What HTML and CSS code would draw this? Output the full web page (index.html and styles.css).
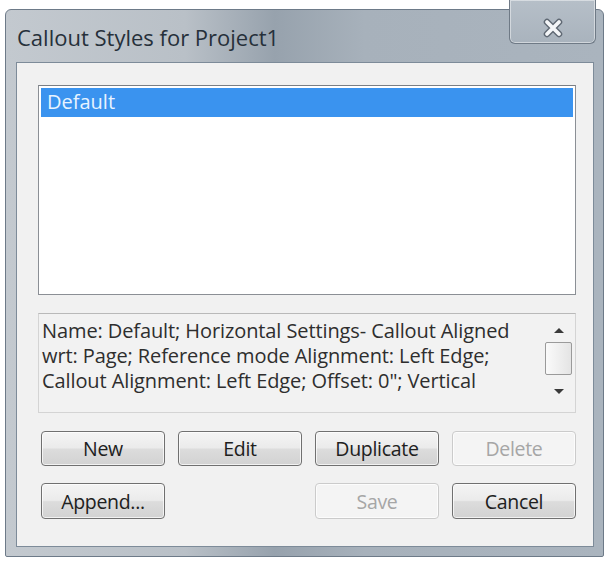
FILE: index.html
```html
<!DOCTYPE html>
<html>
<head>
<meta charset="utf-8">
<link rel="stylesheet" href="styles.css">
</head>
<body>
<div class="window">
  <div class="titlebar">
    <span class="title">Callout Styles for Project1</span>
    <div class="close">
      <svg width="24" height="20" viewBox="0 0 24 20">
        <path d="M6 4 L18 16 M18 4 L6 16" stroke="#5f6873" stroke-width="6.5" stroke-linecap="round"/>
        <path d="M6 4 L18 16 M18 4 L6 16" stroke="#f4f6f8" stroke-width="3.8" stroke-linecap="round"/>
      </svg>
    </div>
  </div>
  <div class="client">
    <div class="list">
      <div class="item selected">Default</div>
    </div>
    <div class="desc">
      <div class="desc-text">Name: Default; Horizontal Settings- Callout Aligned<br>wrt: Page; Reference mode Alignment: Left Edge;<br>Callout Alignment: Left Edge; Offset: 0"; Vertical</div>
      <div class="scroll">
        <span class="arrow up"></span>
        <span class="thumb"></span>
        <span class="arrow down"></span>
      </div>
    </div>
    <div class="buttons">
      <button class="btn">New</button>
      <button class="btn">Edit</button>
      <button class="btn">Duplicate</button>
      <button class="btn disabled">Delete</button>
      <button class="btn tall">Append...</button>
      <span></span>
      <button class="btn tall disabled">Save</button>
      <button class="btn tall">Cancel</button>
    </div>
  </div>
</div>
</body>
</html>
```
FILE: styles.css
```css
html, body {
  margin: 0;
  padding: 0;
  background: #ffffff;
}
body {
  font-family: "Open Sans", "Noto Sans", sans-serif;
}
.window {
  position: relative;
  margin: 9px 0 0 5px;
  width: 599px;
  height: 548px;
  box-sizing: border-box;
  border: 1px solid #6d7a88;
  border-radius: 6px 6px 2px 2px;
  background: linear-gradient(90deg, #c3c9cf 0%, #b9c0c7 30%, #97a2ad 45%, #a7b1bb 60%, #aab4be 100%);
  padding: 0 9px 9px 10px;
  display: flex;
  flex-direction: column;
}
.titlebar {
  height: 52px;
  display: flex;
  align-items: center;
  flex: none;
}
.title {
  font-size: 22px;
  color: #26303a;
  margin-left: 1px;
  margin-top: 1px;
}
.close {
  position: absolute;
  top: -10px;
  left: 503px;
  width: 87px;
  height: 44px;
  box-sizing: border-box;
  border: 1px solid #6f7a86;
  border-top: none;
  border-radius: 0 0 6px 6px;
  background: linear-gradient(180deg, #b6bfc8 0%, #a9b3bd 100%);
  box-shadow: inset 0 0 0 1px rgba(255,255,255,0.45);
  display: flex;
  align-items: center;
  justify-content: center;
  padding-top: 12px;
}
.client {
  flex: 1;
  background: #f1f1f1;
  border: 1px solid #7d8b99;
  padding: 22px 17px 0 21px;
  display: flex;
  flex-direction: column;
}
.list {
  height: 210px;
  box-sizing: border-box;
  background: #ffffff;
  border: 1px solid #8b8f95;
  border-top-color: #7a7e84;
  padding: 2px;
  flex: none;
}
.item {
  height: 29px;
  line-height: 28px;
  font-size: 20px;
  padding-left: 6px;
}
.selected {
  background: #3a93ef;
  color: #e8f3ff;
}
.desc {
  margin-top: 18px;
  height: 100px;
  box-sizing: border-box;
  border: 1px solid #d4d4d4;
  border-top-color: #b9b9b9;
  background: #f2f2f2;
  display: flex;
  flex: none;
}
.desc-text {
  flex: 1;
  font-size: 20px;
  line-height: 25px;
  color: #2e2e2e;
  padding: 4px 0 0 3px;
  letter-spacing: -0.1px;
  white-space: nowrap;
}
.scroll {
  width: 29px;
  margin-right: 2px;
  display: flex;
  flex-direction: column;
  align-items: center;
  padding-top: 14px;
}
.arrow {
  width: 0;
  height: 0;
  border-left: 5px solid transparent;
  border-right: 5px solid transparent;
}
.up {
  border-bottom: 5px solid #3a3a3a;
}
.down {
  border-top: 5px solid #3a3a3a;
  margin-top: 14px;
}
.thumb {
  width: 27px;
  height: 33px;
  box-sizing: border-box;
  margin-top: 9px;
  border: 1px solid #9a9a9a;
  border-radius: 2px;
  background: linear-gradient(90deg, #fafafa 0%, #e4e4e4 100%);
}
.buttons {
  margin-top: 18px;
  margin-left: 3px;
  display: grid;
  grid-template-columns: repeat(4, 1fr);
  column-gap: 13px;
  row-gap: 17px;
}
.btn {
  height: 35px;
  box-sizing: border-box;
  border: 1px solid #707070;
  border-radius: 4px;
  background: linear-gradient(180deg, #f4f4f4 0%, #ebebeb 48%, #dcdcdc 52%, #d2d2d2 100%);
  box-shadow: inset 0 0 0 1px rgba(255,255,255,0.7);
  font-family: "Open Sans", "Noto Sans", sans-serif;
  font-size: 19.5px;
  color: #202020;
  padding: 0;
  letter-spacing: -0.3px;
}
.btn.tall {
  height: 36px;
}
.btn.disabled {
  border-color: #cbcbcb;
  background: #f4f4f4;
  color: #a6a6a6;
}
```
